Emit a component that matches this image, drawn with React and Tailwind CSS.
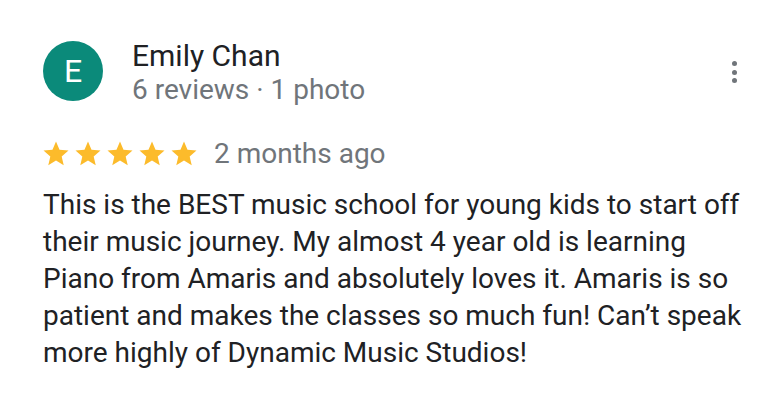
import React from 'react';

const Star = () => (
  <svg viewBox="0 0 24 24" className="w-[30px] h-[30px]" fill="#fcbb2b">
    <path d="M12 17.27L18.18 21l-1.64-7.03L22 9.24l-7.19-.61L12 2 9.19 8.63 2 9.24l5.46 4.73L5.82 21z" />
  </svg>
);

export default function App() {
  return (
    <div className="w-[780px] h-[419px] bg-white pl-[43px] pr-[20px] pt-[39px]" style={{ fontFamily: 'Roboto, "Noto Sans", sans-serif' }}>
      <div className="flex items-start">
        <div className="w-[60px] h-[60px] mt-[2px] rounded-full bg-[#0b8a7a] text-white flex items-center justify-center text-[32px] shrink-0">
          E
        </div>
        <div className="ml-[29px] flex-1">
          <div className="text-[30px] leading-[34px] text-[#202124]">Emily Chan</div>
          <div className="text-[28px] leading-[34px] text-[#70757a]">6 reviews · 1 photo</div>
        </div>
        <div className="flex flex-col items-center gap-[3.5px] mt-[22px] mr-[23px]">
          <span className="w-[5px] h-[5px] rounded-full bg-[#70757a]" />
          <span className="w-[5px] h-[5px] rounded-full bg-[#70757a]" />
          <span className="w-[5px] h-[5px] rounded-full bg-[#70757a]" />
        </div>
      </div>
      <div className="flex items-center mt-[31px]">
        <div className="flex -ml-[2px] gap-[2px]">
          <Star /><Star /><Star /><Star /><Star />
        </div>
        <span className="ml-[15px] text-[28px] text-[#70757a] leading-[32px]">2 months ago</span>
      </div>
      <p className="mt-[16px] text-[28px] leading-[37px] text-[#202124] w-[715px]">
        This is the BEST music school for young kids to start off their music journey. My almost 4 year old is learning Piano from Amaris and absolutely loves it. Amaris is so patient and makes the classes so much fun! Can’t speak more highly of Dynamic Music Studios!
      </p>
    </div>
  );
}
